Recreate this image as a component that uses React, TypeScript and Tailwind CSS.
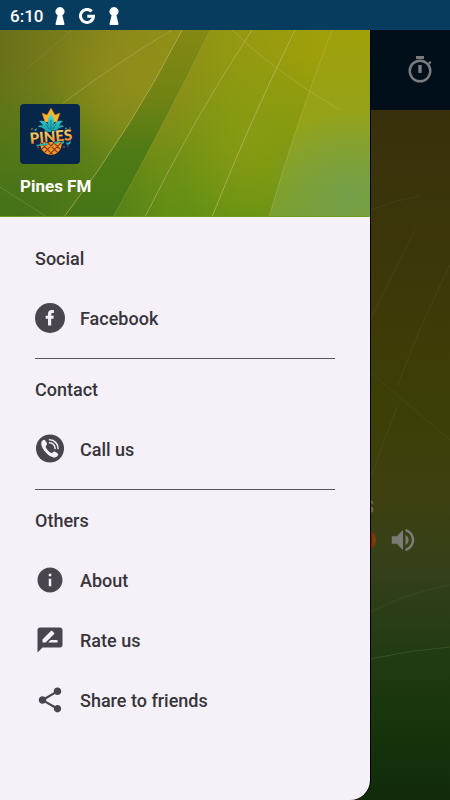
import React from 'react';
import { MdInfo, MdRateReview, MdShare, MdVolumeUp } from 'react-icons/md';

type IconProps = {
  className?: string;
};

type Item = {
  label: string;
  icon: React.ReactNode;
};

type Section = {
  title: string;
  items: Item[];
};

const KeyholeIcon = ({ className }: IconProps) => (
  <svg className={className} viewBox="0 0 10 18" fill="currentColor">
    <path d="M5 0a4.500 4.500 0 0 0-3.300 7.600l.9.700L.6 16.600Q.4 18 1.400 18h7.200q1 0 .8-1.400L7.400 8.300l.9-.7A4.500 4.500 0 0 0 5 0z" />
  </svg>
);

const GoogleIcon = ({ className }: IconProps) => (
  <svg className={className} viewBox="0 0 16 16" fill="none">
    <path
      d="M12.700 3.400A6.500 6.500 0 1 0 14.500 8.200H8.300"
      stroke="currentColor"
      strokeWidth="3"
    />
  </svg>
);

const TimerIcon = ({ className }: IconProps) => (
  <svg className={className} viewBox="0 0 30 30" fill="currentColor">
    <path d="M11 1h8v3h-8zM13.300 10h3.400v8h-3.400zM23 8l2-2 1.500 1.500-2 2z" />
    <circle
      cx="15"
      cy="16"
      r="10.300"
      fill="none"
      stroke="currentColor"
      strokeWidth="2.400"
    />
  </svg>
);

const FacebookIcon = ({ className }: IconProps) => (
  <svg className={className} viewBox="0 0 30 30">
    <circle cx="15" cy="15" r="15" fill="#49454f" />
    <path
      d="M13 22.500v-6.700h-2.300v-3H13v-1.700c0-2.600 1.400-4 3.900-4h2v2.800h-1.300c-1 0-1.400.5-1.400 1.300v1.600h2.600l-.4 3h-2.200v6.700z"
      fill="#f6f1f9"
    />
  </svg>
);

const CallIcon = ({ className }: IconProps) => (
  <svg className={className} viewBox="0 0 30 30">
    <circle cx="15" cy="14.500" r="14" fill="#49454f" />
    <path
      d="M6.300 8.500C6.800 6.900 8.100 5.900 9.200 5.800c.9 0 2.900 3.400 2.900 4.300 0 .9-1.500 1.800-1.400 2.600.2 1.900 4 6 5.900 6.200.9.1 1.900-1.500 2.800-1.400 1 .1 3.900 2.200 3.900 3.100-.2 1.400-1.900 2.700-3.500 2.900C14.300 23.800 5.400 14.200 6.300 8.500z"
      fill="#f6f1f9"
    />
    <path
      d="M14.500 5.800a8.500 8.500 0 0 1 8.500 8.800M14.500 8.800a5.500 5.500 0 0 1 5.600 5.800"
      fill="none"
      stroke="#f6f1f9"
      strokeWidth="1.500"
      strokeLinecap="round"
    />
  </svg>
);

const Logo = () => (
  <svg
    className="h-15 w-15 rounded-sm"
    viewBox="0 0 60 60"
    role="img"
    aria-label="Pines FM"
  >
    <defs>
      <linearGradient id="gold" x1="0" y1="0" x2="0" y2="1">
        <stop offset="0" stopColor="#ffe07a" />
        <stop offset="0.500" stopColor="#fdb84a" />
        <stop offset="1" stopColor="#f47a20" />
      </linearGradient>
      <linearGradient id="leaf" x1="0" y1="0" x2="0" y2="1">
        <stop offset="0" stopColor="#3fe0d6" />
        <stop offset="1" stopColor="#159aa5" />
      </linearGradient>
      <clipPath id="fruit">
        <path d="M20 38h22c0 8-5 13-11 13s-11-5-11-13z" />
      </clipPath>
    </defs>
    <rect width="60" height="60" fill="#06264a" />
    <path
      d="M22 9l5 2 4-7 4 7 5-2-3 9H25z"
      fill="#fbb52e"
      stroke="#d8741a"
      strokeWidth="0.500"
    />
    <path
      d="M31 10c3 4 4 8 2 12 2-4 5-6 10-5-2 1-3 3-4 5 2-1 4-1 5 1-4 0-7 2-8 5H26c-1-3-4-5-8-5 1-2 3-2 5-1-1-2-2-4-4-5 5-1 8 1 10 5-2-4-1-8 2-12z"
      fill="url(#leaf)"
    />
    <path
      d="M31 16v10M26 20l3 5M36 20l-3 5"
      stroke="#0b5f7a"
      strokeWidth="0.700"
      fill="none"
    />
    <g clipPath="url(#fruit)">
      <rect x="19" y="36" width="24" height="16" fill="#f39a25" />
      <path
        d="M18 36l16 16M23 34l18 18M29 34l16 16M15 40l12 12M44 36L28 52M39 34L21 52M33 34L17 50M47 40L35 52"
        stroke="#8e3a16"
        strokeWidth="1.200"
      />
    </g>
    <g transform="rotate(-5 31 33)">
      <text
        x="31"
        y="38"
        textAnchor="middle"
        fontFamily="Lato, sans-serif"
        fontWeight="900"
        fontSize="15"
        fill="url(#gold)"
        stroke="#06264a"
        strokeWidth="1"
        paintOrder="stroke"
      >
        PINES
      </text>
    </g>
    <path
      d="M16 41l12-2v2l-11 1zM34 38l5-1v2l-4 1zM41 38l3-1v2l-2 1zM46 38l2 1 3-3-1 4-3 1z"
      fill="#1fb5b2"
    />
    <path d="M14 26l3-2-1 3zM46 23l1 2h-2z" fill="#27c5c3" />
    <g fill="#f08a2c">
      <circle cx="12" cy="25" r="0.800" />
      <circle cx="18" cy="43" r="0.700" />
      <circle cx="44" cy="43" r="0.700" />
      <circle cx="50" cy="24" r="0.700" />
      <circle cx="48" cy="42" r="0.600" />
    </g>
  </svg>
);

const HeaderArt = () => (
  <svg
    className="absolute inset-0 h-full w-full"
    viewBox="0 0 370 187"
    preserveAspectRatio="none"
    aria-hidden="true"
  >
    <defs>
      <linearGradient id="base" x1="0" y1="0" x2="1" y2="0">
        <stop offset="0" stopColor="#69701a" />
        <stop offset="0.300" stopColor="#85861a" />
        <stop offset="0.600" stopColor="#919712" />
        <stop offset="0.880" stopColor="#a0a009" />
        <stop offset="1" stopColor="#8a9f08" />
      </linearGradient>
      <linearGradient id="fade" x1="0" y1="0" x2="0" y2="1">
        <stop offset="0.150" stopColor="#4f8f15" stopOpacity="0" />
        <stop offset="1" stopColor="#4f8f15" stopOpacity="0.700" />
      </linearGradient>
      <linearGradient id="band" x1="0" y1="0" x2="0" y2="1">
        <stop offset="0" stopColor="#858913" />
        <stop offset="0.350" stopColor="#718313" />
        <stop offset="0.650" stopColor="#4f7b15" />
        <stop offset="1" stopColor="#457517" />
      </linearGradient>
      <linearGradient id="side" x1="0" y1="0" x2="0" y2="1">
        <stop offset="0" stopColor="#a0a009" />
        <stop offset="0.500" stopColor="#94a31a" />
        <stop offset="1" stopColor="#7a9f2e" />
      </linearGradient>
      <radialGradient id="warm">
        <stop offset="0" stopColor="#9b901d" stopOpacity="0.600" />
        <stop offset="1" stopColor="#9b901d" stopOpacity="0" />
      </radialGradient>
      <radialGradient id="lime">
        <stop offset="0" stopColor="#8f9e12" stopOpacity="0.600" />
        <stop offset="1" stopColor="#8f9e12" stopOpacity="0" />
      </radialGradient>
      <radialGradient id="cool">
        <stop offset="0" stopColor="#74a04e" stopOpacity="0.900" />
        <stop offset="1" stopColor="#74a04e" stopOpacity="0" />
      </radialGradient>
      <radialGradient id="shade">
        <stop offset="0" stopColor="#3f6b18" stopOpacity="0.800" />
        <stop offset="1" stopColor="#3f6b18" stopOpacity="0" />
      </radialGradient>
    </defs>
    <rect width="370" height="187" fill="url(#base)" />
    <rect width="370" height="187" fill="url(#fade)" />
    <ellipse cx="20" cy="187" rx="150" ry="130" fill="url(#shade)" />
    <ellipse cx="135" cy="50" rx="90" ry="80" fill="url(#warm)" />
    <path d="M182 0Q133 97 64 187H113Q163 96 210 0z" fill="url(#band)" />
    <ellipse cx="250" cy="110" rx="75" ry="110" fill="url(#lime)" />
    <path d="M332 0Q297 91 269 187H370V0z" fill="url(#side)" />
    <ellipse cx="350" cy="165" rx="85" ry="85" fill="url(#cool)" />
    <g fill="none" stroke="#c2bc70" strokeWidth="1">
      <path d="M182 0Q133 97 64 187" strokeOpacity="0.600" />
      <path d="M210 0Q163 96 113 187" strokeOpacity="0.200" />
      <path d="M252 0Q193 90 145 187" strokeOpacity="0.550" />
      <path d="M295 0Q250 91 212 187" strokeOpacity="0.650" />
      <path d="M332 0Q297 91 269 187" strokeOpacity="0.350" />
      <path d="M172 0Q115 34 63 73" strokeOpacity="0.400" />
      <path d="M232 0Q275 42 340 80" strokeOpacity="0.350" />
      <path d="M0 157L47 187" strokeOpacity="0.250" />
      <path d="M72 0L28 38" strokeOpacity="0.150" />
    </g>
    <rect y="186" width="370" height="1" fill="#6aa312" />
  </svg>
);

const PlayerArt = () => (
  <svg
    className="absolute inset-0 h-full w-full"
    viewBox="0 0 450 690"
    preserveAspectRatio="none"
    aria-hidden="true"
  >
    <defs>
      <linearGradient id="night" x1="0" y1="0" x2="0" y2="1">
        <stop offset="0" stopColor="#38300c" />
        <stop offset="0.300" stopColor="#3e3a08" />
        <stop offset="0.440" stopColor="#3c4006" />
        <stop offset="0.560" stopColor="#3e4010" />
        <stop offset="0.670" stopColor="#34401a" />
        <stop offset="0.780" stopColor="#233b13" />
        <stop offset="0.880" stopColor="#18350c" />
        <stop offset="1" stopColor="#112b0b" />
      </linearGradient>
    </defs>
    <rect width="450" height="690" fill="url(#night)" />
    <g fill="none" stroke="#8a8a50" strokeOpacity="0.120">
      <path d="M415 120Q392 165 370 210" />
      <path d="M450 155Q418 220 398 275" />
      <path d="M370 262L450 330" />
      <path d="M398 295Q382 335 370 370" />
      <path d="M370 502Q410 482 450 475" />
      <path d="M370 549Q410 540 450 537" strokeOpacity="0.250" />
      <path d="M370 100Q394 90 420 86" />
    </g>
  </svg>
);

const sections: Section[] = [
  {
    title: 'Social',
    items: [
      { label: 'Facebook', icon: <FacebookIcon className="h-7.5 w-7.5" /> },
    ],
  },
  {
    title: 'Contact',
    items: [{ label: 'Call us', icon: <CallIcon className="h-7.5 w-7.5" /> }],
  },
  {
    title: 'Others',
    items: [
      { label: 'About', icon: <MdInfo size={30} /> },
      { label: 'Rate us', icon: <MdRateReview size={30} /> },
      { label: 'Share to friends', icon: <MdShare size={30} /> },
    ],
  },
];

const StatusBar = () => (
  <div className="flex h-[30px] items-center bg-[#073c5e] px-2.5 pt-0.5 text-white">
    <span className="mr-3 text-[17px] font-medium leading-none">6:10</span>
    <KeyholeIcon className="mr-3.5 h-4.5 w-2.5" />
    <GoogleIcon className="mr-3.5 h-4 w-4" />
    <KeyholeIcon className="h-4.5 w-2.5" />
  </div>
);

const Player = () => (
  <div className="flex grow flex-col">
    <div className="flex h-20 items-center justify-end bg-[#010f1a] px-[15px] text-[#7a7c7e]">
      <button type="button" aria-label="Sleep timer">
        <TimerIcon className="h-7.5 w-7.5" />
      </button>
    </div>
    <div className="relative flex grow flex-col justify-end pb-[245px]">
      <PlayerArt />
      <div className="relative flex flex-col items-end pr-8">
        <p className="pr-11 text-lg leading-6 text-[#6d6e58]">S</p>
        <div className="mt-1.5 flex items-center gap-3">
          <span className="h-5 w-5 rounded-full bg-linear-to-r from-[#8a0500] from-75% to-[#7d4208] to-90%" />
          <button type="button" aria-label="Volume" className="text-[#7b7c75]">
            <MdVolumeUp size={30} />
          </button>
        </div>
      </div>
    </div>
  </div>
);

const Drawer = () => (
  <aside className="absolute inset-y-0 left-0 right-20 overflow-hidden rounded-br-[20px] bg-[#f6f1f9] shadow-[1px_0_0_#000]">
    <header className="relative flex h-[187px] flex-col justify-end px-5 pb-[19px]">
      <HeaderArt />
      <div className="relative">
        <Logo />
        <h1 className="mt-2.5 text-[17px] font-bold leading-6 text-white">
          Pines FM
        </h1>
      </div>
    </header>
    <nav className="px-[35px] pt-[11px] text-lg font-medium text-[#37343c]">
      {sections.map((section, index) => (
        <section key={section.title}>
          {index > 0 && <hr className="mt-2.5 border-t border-[#57535d]" />}
          <h2 className="flex h-15 items-center pt-0.5 font-medium">
            {section.title}
          </h2>
          {section.items.map((item) => (
            <a
              key={item.label}
              href="#"
              className="flex h-15 items-center gap-[15px]"
            >
              <span className="text-[#49454f]">{item.icon}</span>
              <span className="pt-0.5">{item.label}</span>
            </a>
          ))}
        </section>
      ))}
    </nav>
  </aside>
);

const App = () => (
  <div className="flex min-h-screen flex-col bg-black font-[Roboto,sans-serif]">
    <StatusBar />
    <main className="relative flex grow flex-col">
      <Player />
      <Drawer />
    </main>
  </div>
);

export default App;
